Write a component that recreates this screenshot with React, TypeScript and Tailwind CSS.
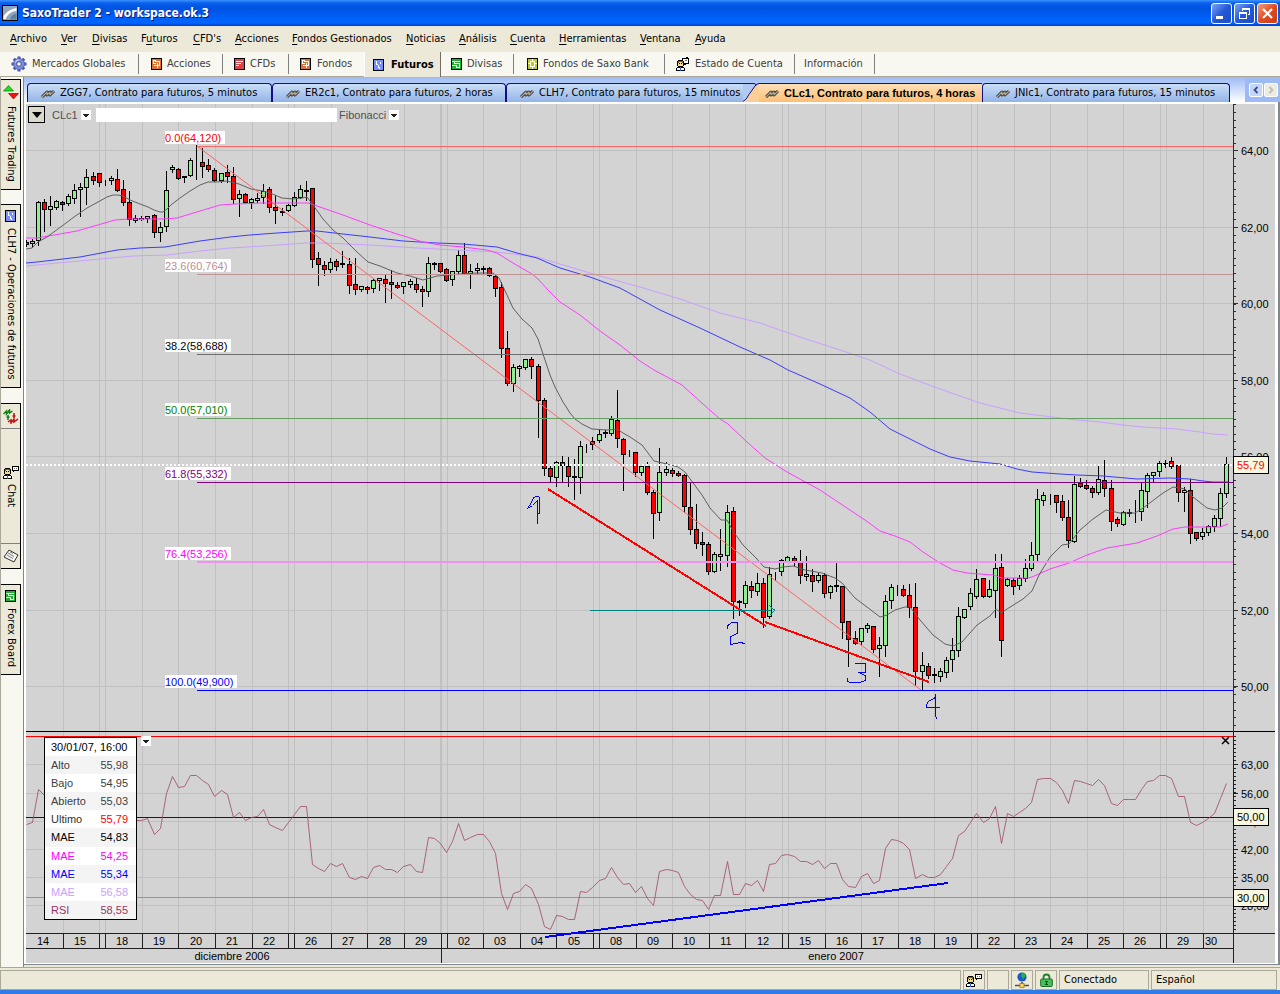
import type { ReactNode } from 'react'

type CandleKind = 'u' | 'd' | 'j' | 'w'
type Candle = [kind: CandleKind, high: number, top: number, bottom: number, low: number]

const UI_FONT = "font-['DejaVu_Sans_Condensed','Noto_Sans',sans-serif]"

const MENU = [
  { label: 'Archivo', hot: 0, width: 'w-[51px]' },
  { label: 'Ver', hot: 0, width: 'w-[31px]' },
  { label: 'Divisas', hot: 0, width: 'w-[49px]' },
  { label: 'Futuros', hot: 1, width: 'w-[52px]' },
  { label: "CFD's", hot: 0, width: 'w-[42px]' },
  { label: 'Acciones', hot: 0, width: 'w-[57px]' },
  { label: 'Fondos Gestionados', hot: 0, width: 'w-[114px]' },
  { label: 'Noticias', hot: 0, width: 'w-[53px]' },
  { label: 'Análisis', hot: 0, width: 'w-[51px]' },
  { label: 'Cuenta', hot: 0, width: 'w-[49px]' },
  { label: 'Herramientas', hot: 0, width: 'w-[81px]' },
  { label: 'Ventana', hot: 0, width: 'w-[55px]' },
  { label: 'Ayuda', hot: 0, width: 'w-[51px]' },
]

const LEGEND = [
  { label: 'Alto', value: '55,98', color: 'text-[#404040]' },
  { label: 'Bajo', value: '54,95', color: 'text-[#404040]' },
  { label: 'Abierto', value: '55,03', color: 'text-[#404040]' },
  { label: 'Ultimo', value: '55,79', color: 'text-[#303030]', valueColor: 'text-[#ff0000]' },
  { label: 'MAE', value: '54,83', color: 'text-black' },
  { label: 'MAE', value: '54,25', color: 'text-[#ff00ff]' },
  { label: 'MAE', value: '55,34', color: 'text-[#0000ff]' },
  { label: 'MAE', value: '56,58', color: 'text-[#c8a0ff]' },
  { label: 'RSI', value: '58,55', color: 'text-[#993366]' },
]

const GRID_X = [
  63, 99, 105, 142, 178, 215, 252, 288, 294, 331, 367, 404, 441, 447, 483, 520, 556, 593, 599, 636, 672, 709, 745,
  782, 788, 825, 861, 898, 934, 971, 977, 1014, 1050, 1087, 1123, 1160, 1166, 1203,
]

const DAYS: [string, number][] = [
  ['14', 43], ['15', 80], ['18', 122], ['19', 159], ['20', 196], ['21', 232], ['22', 269], ['26', 311], ['27', 348],
  ['28', 385], ['29', 421], ['02', 464], ['03', 500], ['04', 537], ['05', 574], ['08', 616], ['09', 653], ['10', 689],
  ['11', 726], ['12', 763], ['15', 805], ['16', 842], ['17', 878], ['18', 915], ['19', 951], ['22', 994], ['23', 1031],
  ['24', 1067], ['25', 1104], ['26', 1140], ['29', 1183], ['30', 1211],
]

const PRICES: [string, number][] = [
  ['64,00', 150], ['62,00', 227], ['60,00', 303], ['58,00', 380], ['56,00', 456], ['54,00', 533], ['52,00', 610],
  ['50,00', 686],
]

const RSI_SCALE: [string, number][] = [
  ['63,00', 764], ['56,00', 793], ['49,00', 821], ['42,00', 849], ['35,00', 877], ['28,00', 905],
]

const FIBO = [
  { label: '0.0(64,120)', y: 146, line: '#ff6464', text: '#ff0000', width: 60 },
  { label: '23.6(60,764)', y: 274, line: '#c09494', text: '#bc8f8f', width: 66 },
  { label: '38.2(58,688)', y: 354, line: '#6e6e6e', text: '#000000', width: 66 },
  { label: '50.0(57,010)', y: 418, line: '#64a064', text: '#008000', width: 66 },
  { label: '61.8(55,332)', y: 482, line: '#800080', text: '#800080', width: 66 },
  { label: '76.4(53,256)', y: 562, line: '#f090f0', text: '#ff00ff', width: 66 },
  { label: '100.0(49,900)', y: 690, line: '#0000ff', text: '#0000ff', width: 72 },
]

// One entry per four hour bar: kind, high, body top, body bottom, low
const CANDLES: Candle[] = [
  ['d', 240, 242, 244, 246], ['u', 239, 241, 243, 246], ['u', 201, 202, 240, 245], ['d', 199, 202, 209, 231],
  ['u', 196, 206, 209, 225], ['u', 200, 201, 207, 209], ['d', 201, 202, 204, 210], ['u', 194, 196, 203, 205],
  ['u', 184, 190, 198, 203], ['u', 183, 187, 189, 216], ['u', 169, 177, 187, 204], ['d', 172, 176, 180, 184],
  ['d', 173, 173, 182, 186], ['w', 180, 180, 185, 185], ['u', 176, 178, 180, 184], ['d', 169, 179, 190, 191],
  ['d', 180, 189, 202, 205], ['d', 191, 202, 219, 225], ['u', 215, 218, 220, 222], ['u', 216, 218, 219, 220],
  ['u', 216, 216, 218, 222], ['d', 214, 215, 232, 237], ['u', 222, 227, 232, 241], ['u', 171, 190, 226, 231],
  ['u', 165, 167, 169, 172], ['d', 168, 169, 178, 179], ['j', 176, 176, 176, 182], ['u', 158, 160, 175, 176],
  ['w', 145, 161, 161, 179], ['d', 148, 162, 166, 177], ['d', 159, 165, 169, 171], ['d', 168, 170, 180, 181],
  ['u', 173, 173, 180, 182], ['d', 165, 172, 176, 182], ['d', 167, 176, 199, 203], ['u', 190, 194, 198, 216],
  ['d', 193, 194, 202, 203], ['u', 198, 199, 202, 208], ['u', 193, 198, 200, 202], ['u', 184, 191, 197, 203],
  ['d', 187, 189, 207, 212], ['d', 195, 207, 210, 223], ['j', 208, 211, 211, 215], ['u', 204, 205, 210, 211],
  ['u', 192, 197, 205, 206], ['u', 185, 189, 197, 198], ['j', 181, 190, 190, 200], ['d', 188, 188, 259, 267],
  ['d', 252, 258, 264, 285], ['d', 261, 265, 269, 275], ['u', 258, 262, 269, 272], ['d', 259, 261, 266, 270],
  ['j', 251, 263, 263, 267], ['d', 258, 264, 285, 293], ['d', 258, 284, 289, 294], ['u', 286, 286, 289, 291],
  ['d', 286, 287, 289, 293], ['u', 279, 280, 288, 292], ['u', 278, 278, 280, 290], ['d', 274, 279, 283, 302],
  ['d', 270, 282, 284, 298], ['d', 282, 285, 287, 288], ['u', 282, 282, 286, 293], ['u', 279, 281, 284, 287],
  ['d', 278, 284, 289, 292], ['d', 286, 289, 291, 306], ['u', 257, 263, 291, 296], ['j', 262, 263, 263, 269],
  ['d', 263, 263, 271, 272], ['d', 268, 269, 280, 281], ['u', 271, 271, 279, 285], ['u', 250, 255, 271, 274],
  ['d', 243, 255, 273, 274], ['u', 264, 271, 273, 288], ['u', 263, 268, 270, 274], ['j', 266, 268, 268, 273],
  ['d', 267, 268, 275, 276], ['d', 275, 276, 288, 296], ['d', 282, 287, 348, 357], ['d', 331, 348, 383, 385],
  ['u', 364, 367, 383, 391], ['u', 365, 366, 368, 376], ['u', 359, 359, 367, 369], ['d', 357, 359, 366, 378],
  ['d', 364, 366, 400, 437], ['d', 398, 400, 468, 475], ['d', 466, 468, 476, 482], ['u', 461, 462, 477, 486],
  ['d', 456, 462, 465, 482], ['d', 457, 466, 476, 486], ['j', 459, 476, 476, 499], ['u', 441, 446, 477, 493],
  ['w', 444, 447, 447, 452], ['d', 437, 441, 444, 449], ['u', 430, 434, 440, 442], ['j', 430, 432, 432, 437],
  ['u', 416, 419, 433, 435], ['d', 390, 420, 438, 447], ['d', 438, 439, 454, 490], ['w', 450, 450, 456, 456],
  ['d', 452, 452, 472, 476], ['u', 466, 466, 472, 475], ['d', 462, 466, 492, 494], ['d', 490, 492, 513, 538],
  ['u', 448, 472, 512, 520], ['u', 462, 469, 472, 475], ['d', 468, 470, 473, 476], ['d', 471, 473, 475, 476],
  ['d', 474, 475, 506, 512], ['d', 482, 507, 529, 534], ['d', 504, 529, 543, 548], ['d', 532, 542, 544, 555],
  ['d', 542, 544, 571, 574], ['u', 552, 554, 571, 572], ['u', 529, 554, 556, 570], ['u', 505, 512, 555, 566],
  ['d', 507, 511, 601, 618], ['j', 600, 601, 601, 615], ['u', 581, 585, 603, 607], ['d', 581, 586, 590, 597],
  ['u', 573, 583, 591, 595], ['d', 578, 583, 617, 627], ['u', 567, 574, 616, 618], ['w', 572, 572, 580, 580],
  ['u', 559, 560, 571, 575], ['u', 556, 557, 561, 562], ['d', 556, 558, 561, 566], ['d', 550, 562, 575, 583],
  ['u', 556, 574, 576, 580], ['d', 569, 575, 581, 591], ['u', 573, 575, 580, 582], ['d', 573, 575, 593, 597],
  ['u', 585, 586, 592, 598], ['j', 563, 585, 585, 591], ['d', 586, 586, 622, 638], ['d', 621, 621, 639, 666],
  ['d', 631, 638, 643, 644], ['u', 628, 628, 641, 644], ['u', 623, 625, 628, 632], ['d', 626, 626, 649, 652],
  ['u', 637, 645, 648, 676], ['u', 595, 601, 645, 656], ['u', 584, 587, 600, 608], ['w', 585, 585, 595, 595],
  ['d', 585, 589, 595, 596], ['d', 584, 595, 607, 617], ['d', 583, 607, 671, 685], ['u', 652, 665, 671, 690],
  ['d', 663, 666, 675, 678], ['j', 668, 674, 674, 682], ['u', 668, 671, 676, 681], ['u', 657, 660, 672, 677],
  ['u', 638, 650, 659, 671], ['u', 607, 616, 650, 656], ['u', 609, 609, 617, 618], ['u', 588, 593, 606, 609],
  ['u', 569, 579, 596, 598], ['d', 578, 578, 596, 597], ['u', 580, 589, 596, 597], ['u', 554, 568, 590, 617],
  ['d', 554, 567, 640, 656], ['u', 578, 579, 585, 586], ['d', 578, 580, 586, 594], ['u', 575, 578, 585, 589],
  ['u', 559, 568, 578, 581], ['u', 542, 555, 568, 570], ['u', 489, 499, 554, 562], ['u', 492, 495, 500, 505],
  ['w', 494, 494, 504, 504], ['d', 495, 495, 502, 512], ['d', 495, 501, 517, 520], ['d', 500, 517, 540, 547],
  ['u', 476, 484, 541, 542], ['d', 478, 483, 486, 487], ['d', 480, 485, 488, 489], ['d', 486, 488, 492, 497],
  ['u', 466, 479, 492, 494], ['d', 460, 480, 488, 496], ['d', 480, 488, 521, 530], ['d', 517, 519, 523, 526],
  ['u', 511, 512, 524, 525], ['j', 509, 512, 512, 516], ['w', 500, 500, 522, 522], ['u', 482, 490, 511, 520],
  ['u', 473, 475, 491, 507], ['u', 472, 472, 475, 481], ['u', 461, 463, 471, 476], ['j', 460, 463, 463, 467],
  ['d', 457, 461, 466, 468], ['d', 465, 465, 492, 501], ['u', 487, 490, 492, 511], ['d', 479, 490, 533, 543],
  ['d', 532, 532, 538, 540], ['u', 528, 532, 536, 539], ['u', 525, 526, 532, 535], ['u', 515, 518, 526, 531],
  ['u', 488, 493, 518, 526], ['u', 457, 464, 493, 497],
]

const RSI = [
  824, 822, 789, 795, 800, 797, 792, 790, 788, 786, 790, 784, 790, 796, 792, 800, 812, 820, 820, 820, 818, 834, 828,
  793, 776, 787, 786, 775, 775, 780, 784, 796, 790, 794, 817, 812, 820, 817, 816, 809, 824, 827, 830, 822, 814, 806,
  806, 864, 868, 871, 863, 866, 863, 877, 879, 876, 878, 867, 865, 869, 869, 872, 866, 864, 871, 872, 837, 838, 843,
  852, 841, 823, 840, 837, 834, 834, 841, 853, 893, 909, 893, 891, 884, 888, 904, 926, 929, 915, 916, 919, 919, 891,
  892, 887, 880, 878, 867, 877, 884, 883, 892, 886, 898, 905, 871, 869, 870, 872, 886, 894, 899, 900, 909, 895, 895,
  861, 894, 894, 883, 885, 880, 891, 864, 863, 855, 854, 856, 861, 861, 864, 860, 868, 863, 863, 879, 886, 887, 876,
  873, 883, 880, 848, 839, 840, 843, 849, 878, 874, 877, 877, 874, 866, 858, 835, 831, 822, 813, 822, 818, 806, 843,
  813, 816, 812, 808, 802, 779, 778, 778, 782, 790, 803, 780, 781, 783, 785, 779, 785, 803, 805, 799, 799, 799, 789,
  781, 780, 775, 775, 778, 796, 796, 822, 825, 822, 818, 813, 798, 783,
]

const MA_FAST =
  '26,249 32,248 38,242 47,237 62,226 74,217 87,208 98,202 107,197 113,195 118,195 123,196 130,200 140,204 148,207 154,210 160,212 163,212 167,209 172,204 180,198 190,191 200,185 208,182 217,182 227,181 239,184 251,189 263,191 270,193 282,198 293,199 302,198 307,197 313,205 323,219 333,230 343,238 357,252 368,262 380,266 397,273 410,276 423,280 437,276 460,274 477,273 493,273 499,278 507,295 513,308 522,319 532,328 538,339 544,357 550,375 555,387 563,402 570,413 575,419 582,424 592,429 607,430 617,429 623,433 630,437 642,445 648,453 654,461 667,464 678,467 685,472 702,495 710,508 721,520 727,520 733,531 743,545 757,559 764,567 775,569 783,567 793,566 805,570 822,573 835,578 842,583 855,598 867,607 880,617 887,615 895,610 905,607 910,607 920,620 933,635 945,644 953,646 962,642 977,625 990,616 996,609 1001,613 1007,609 1023,599 1032,591 1039,575 1050,557 1062,545 1069,544 1080,530 1093,519 1106,510 1120,513 1135,513 1143,508 1163,493 1173,487 1185,489 1193,497 1207,508 1215,510 1222,508 1228,502'
const MA_MEDIUM =
  '26,238 37,238 77,231 115,220 128,219 163,219 177,218 200,211 220,205 235,204 263,203 302,203 308,203 317,206 343,215 370,225 397,234 423,242 440,245 463,247 487,250 497,253 513,263 532,274 538,279 548,290 560,302 580,315 600,331 620,345 640,361 654,370 682,385 703,404 720,419 728,424 747,442 765,458 787,472 820,490 835,500 850,510 865,520 880,531 895,536 910,542 923,552 940,563 953,570 967,573 993,575 1002,578 1027,578 1032,577 1050,569 1069,563 1087,555 1107,548 1137,543 1157,536 1173,529 1185,527 1213,527 1220,527 1228,524'
const MA_SLOW =
  '26,263 37,262 80,257 117,250 140,248 165,247 200,241 230,237 250,235 277,233 307,231 317,231 343,234 370,237 403,241 437,243 463,244 497,247 517,253 537,258 560,268 590,277 620,288 660,310 700,328 740,347 770,360 788,370 820,384 850,398 870,412 890,429 910,439 930,449 950,457 970,461 1000,464 1017,469 1032,472 1060,474 1077,475 1103,476 1137,479 1170,478 1190,479 1203,481 1213,482 1228,482'
const MA_SLOWEST =
  '26,266 100,259 133,256 167,255 200,251 230,248 263,246 307,243 323,243 370,245 417,248 457,250 497,252 537,257 560,264 600,276 640,287 680,299 720,313 760,323 800,337 840,350 870,360 900,374 940,389 980,403 1020,413 1060,418 1077,420 1100,422 1123,425 1143,427 1177,429 1200,432 1213,434 1228,435'

// The first bar stands six bars left of the first day boundary
const barX = (i: number) => Math.floor(62.6 + 6.0955 * (i - 6))

const RSI_POINTS = RSI.map((y, i) => `${barX(i) + 0.5},${y + 0.5}`).join(' ')

function CandleBar({ candle, x }: { candle: Candle; x: number }) {
  const [kind, high, top, bottom, low] = candle
  return (
    <g>
      <rect x={x} y={high} width={1} height={low - high + 1} fill="#000" />
      {kind === 'j' && <rect x={x - 2} y={top} width={5} height={2} fill="#000" />}
      {(kind === 'u' || kind === 'd') && (
        <>
          <rect x={x - 2} y={top} width={5} height={bottom - top + 1} fill="#000" />
          <rect
            x={x - 1}
            y={top + 1}
            width={3}
            height={Math.max(bottom - top - 1, 1)}
            fill={kind === 'u' ? '#90ee90' : '#ff0000'}
          />
        </>
      )}
    </g>
  )
}

function PriceTag({ y, label, color }: { y: number; label: string; color: string }) {
  return (
    <g>
      <rect x={1233.5} y={y + 0.5} width={35} height={17} fill="#f8f8e0" stroke="#000" />
      <text x={1237} y={y + 13} fill={color}>
        {label}
      </text>
    </g>
  )
}

function PriceChart() {
  return (
    <svg viewBox="26 104 1249 627" className="block h-auto w-full font-['Liberation_Sans',Arial,sans-serif] text-[11px]">
      <g shapeRendering="crispEdges">
        <g fill="#c0c0c0">
          {GRID_X.map((x) => (
            <rect key={x} x={x} y={104} width={1} height={627} />
          ))}
          <rect x={440} y={104} width={2} height={627} />
          {PRICES.map(([label, y]) => (
            <rect key={label} x={26} y={y} width={1207} height={1} />
          ))}
        </g>
        {CANDLES.map((candle, i) => (
          <CandleBar key={i} candle={candle} x={barX(i)} />
        ))}
      </g>

      <g fill="none" strokeWidth={1}>
        <polyline points={MA_SLOWEST} stroke="#c8a0ff" />
        <polyline points={MA_SLOW} stroke="#3c3cff" />
        <polyline points={MA_MEDIUM} stroke="#ff3cff" />
        <polyline points={MA_FAST} stroke="#606060" />
      </g>

      <line x1={197} y1={146} x2={921} y2={690} stroke="#ff6464" />
      <g shapeRendering="crispEdges">
        <line x1={26} y1={465} x2={1233} y2={465} stroke="#fff" strokeWidth={2} strokeDasharray="2 2" />
        {FIBO.map((level) => (
          <g key={level.label}>
            <rect x={197} y={level.y} width={1036} height={1} fill={level.line} />
            {level.y === 562 && <rect x={197} y={561} width={1036} height={1} fill={level.line} />}
            <rect x={165} y={level.y - 15} width={level.width} height={13} fill="#fff" />
            <text x={165} y={level.y - 4} fill={level.text}>
              {level.label}
            </text>
          </g>
        ))}
        <g fill="none" strokeWidth={2} stroke="#ff0000">
          <path d="M548 489 L766 626" />
          <path d="M765 622 L929 682" />
        </g>
        <g fill="none" stroke="#008080">
          <path d="M590 610.5 H771" />
          <path d="M769.5 605 L771.5 608 L774.5 610 L772.5 613 L769.5 616" strokeDasharray="2 1" />
        </g>
        <g fill="none" stroke="#0000ff" strokeWidth={1}>
          <path d="M527.5 508.5 L531.5 502.5 L533.5 497.5 L536 496.5 H539 L539.5 502 V513.5 H537.5 V523.5 M527.5 508.5 L532.5 505.5 L537.5 500.5 V513" />
          <path d="M727.5 628.5 V626 L731.5 622.5 H737.5 V633.5 L730.5 636.5 V644.5 L740 642.5 L745 643.5" />
          <path d="M854.5 663.5 H865.5 V672.5 H858.5 L865.5 675.5 V680.5 L860 682.5 H850 L847.5 681 V678" />
          <path d="M935.5 693.5 V713.5 L936.5 719.5 M935.5 697.5 L928.5 701.5 L926.5 704.5 V707.5 H940" />
        </g>
      </g>

      <g shapeRendering="crispEdges" fill="#303030">
        <rect x={1233} y={104} width={1} height={627} />
        {Array.from({ length: 82 }, (_, i) => Math.round(150.4 + (i - 6) * 7.66)).filter((y) => y < 730).map((y) => (
          <rect key={y} x={1234} y={y} width={2} height={1} />
        ))}
        {PRICES.map(([label, y]) => (
          <rect key={label} x={1234} y={y} width={4} height={1} />
        ))}
      </g>
      {PRICES.map(([label, y]) => (
        <text key={label} x={1241} y={y + 5} fill="#000">
          {label}
        </text>
      ))}
      <PriceTag y={456} label="55,79" color="#ff0000" />
    </svg>
  )
}

function RsiChart() {
  return (
    <svg viewBox="26 731 1249 232" className="block h-auto w-full font-['Liberation_Sans',Arial,sans-serif] text-[11px]">
      <g shapeRendering="crispEdges">
        <g fill="#c0c0c0">
          {GRID_X.map((x) => (
            <rect key={x} x={x} y={731} width={1} height={202} />
          ))}
          <rect x={440} y={731} width={2} height={202} />
          {RSI_SCALE.map(([label, y]) => (
            <rect key={label} x={26} y={y} width={1207} height={1} />
          ))}
        </g>
        <rect x={26} y={731} width={1249} height={1} fill="#000" />
        <rect x={26} y={736} width={1207} height={1} fill="#ff0000" />
        <rect x={26} y={817} width={1207} height={1} fill="#0000ff" />
        <rect x={26} y={897} width={1207} height={1} fill="#00ff00" />
      </g>
      <polyline points={RSI_POINTS} fill="none" stroke="#a05070" strokeWidth={1} strokeOpacity={0.85} />

      <g shapeRendering="crispEdges" fill="#202020">
        <rect x={26} y={933} width={1249} height={1} />
        <rect x={26} y={948} width={1208} height={1} />
        <rect x={1233} y={731} width={1} height={232} />
        <rect x={441} y={948} width={1} height={15} />
        {GRID_X.map((x) => (
          <rect key={x} x={x} y={933} width={1} height={15} />
        ))}
        {Array.from({ length: 49 }, (_, i) => Math.round(736 + i * 4.03)).map((y) => (
          <rect key={y} x={1234} y={y} width={2} height={1} />
        ))}
        {RSI_SCALE.map(([label, y]) => (
          <rect key={label} x={1234} y={y} width={4} height={1} />
        ))}
      </g>
      <path d="M545 937 L948 883" fill="none" stroke="#0000ff" strokeWidth={2} shapeRendering="crispEdges" />

      <g fill="#000">
        {DAYS.map(([label, x]) => (
          <text key={x} x={x} y={945} textAnchor="middle">
            {label}
          </text>
        ))}
        <text x={232} y={960} textAnchor="middle">
          diciembre 2006
        </text>
        <text x={836} y={960} textAnchor="middle">
          enero 2007
        </text>
        {RSI_SCALE.map(([label, y]) => (
          <text key={label} x={1241} y={y + 5}>
            {label}
          </text>
        ))}
      </g>
      <PriceTag y={808} label="50,00" color="#000" />
      <PriceTag y={889} label="30,00" color="#000" />
    </svg>
  )
}

function GearIcon() {
  return (
    <svg width="16" height="16" viewBox="0 0 16 16" aria-hidden="true">
      <g stroke="#4a56b0" strokeWidth="3">
        <path d="M8 .5v15M.5 8h15M2.8 2.8l10.4 10.4M13.2 2.8L2.8 13.2" />
      </g>
      <circle cx="8" cy="8" r="5.5" fill="#7f8fdc" stroke="#4a56b0" strokeWidth=".8" />
      <path d="M4.3 6.5a4.2 4.2 0 0 1 4-2.6" fill="none" stroke="#c4cefa" strokeWidth="1.4" />
      <circle cx="8" cy="8" r="2.3" fill="#f8f7f0" stroke="#3c4898" />
    </svg>
  )
}

function BoxIcon({ color, children }: { color: string; children: ReactNode }) {
  return (
    <svg width="11" height="12" viewBox="0 0 11 12" shapeRendering="crispEdges" className="shrink-0" aria-hidden="true">
      <rect width="11" height="12" fill="#000" />
      <rect x="1" y="1" width="9" height="10" fill={color} />
      <g fill="#fff">{children}</g>
    </svg>
  )
}

const ICONS = {
  stocks: (
    <BoxIcon color="#e07030">
      <path d="M2 2h3v1H2zM2 3h1v3H2zM3 5h2v1H3zM4 3h5v1H4zM8 4h1v4H8zM6 5h1v5H6zM3 7h3v1H3zM7 7h1v1H7z" />
    </BoxIcon>
  ),
  cfds: (
    <BoxIcon color="#e04048">
      <path d="M2 3h7v1H2zM2 5h5v1H2zM2 7h3v1H2z" />
    </BoxIcon>
  ),
  futures: (
    <BoxIcon color="#7890f8">
      <path d="M3 2h1v4H3zM4 5h1v1H4zM5 6h1v3H5zM6 8h1v2H6zM7 3h1v2H7z" />
    </BoxIcon>
  ),
  forex: (
    <BoxIcon color="#20b030">
      <path d="M1 3h8v1H1zM3 4h1v2H3zM3 5h6v1H3zM8 6h1v3H8zM1 7h5v1H1zM5 8h1v2H5zM5 9h4v1H5z" />
    </BoxIcon>
  ),
  funds: (
    <BoxIcon color="#c0c830">
      <path d="M3 3h5v1H3zM3 8h5v1H3zM3 4h1v4H3zM7 4h1v4H7zM5 1h1v2H5zM5 9h1v2H5zM1 5h2v1H1zM8 5h2v1H8z" />
    </BoxIcon>
  ),
}

// Head, hair, shirt and tie on whole pixels, shared by the toolbar, side strip and status bar
function Person() {
  return (
    <g>
      <path d="M2 3h5v1h1v5H7v1H2V9H1V4h1z" fill="#000" />
      <path d="M2 5h5v4H2z" fill="#f0dc8c" />
      <path d="M2 4h5v2H6V5H3v1H2z" fill="#806020" />
      <path d="M3 6h1v1H3zM5 6h1v1H5z" fill="#000" />
      <path d="M1 10h7v1h1v3H0v-3h1z" fill="#000" />
      <path d="M1 11h7v2H1z" fill="#fff" />
      <path d="M4 10h1v4H4z" fill="#3060e0" />
    </g>
  )
}

function PersonIcon() {
  return (
    <svg width="14" height="14" viewBox="0 0 14 14" shapeRendering="crispEdges" className="shrink-0" aria-hidden="true">
      <path d="M6 1h4V0h2v1h1v6h-3v1H8V3H6z" fill="#000" />
      <path d="M7 2h5v4H8V3H7z" fill="#fff" />
      <path d="M9 3h2v1H9z" fill="#707070" />
      <Person />
    </svg>
  )
}

function ChatIcon() {
  return (
    <svg width="16" height="14" viewBox="0 0 16 14" shapeRendering="crispEdges" className="shrink-0" aria-hidden="true">
      <path d="M9 1h7v5h-5v1h-1V6H9z" fill="#000" />
      <path d="M10 2h5v3h-5z" fill="#fff" />
      <path d="M11 3h1v1h-1zM13 3h1v1h-1z" fill="#707070" />
      <Person />
    </svg>
  )
}

function TickIcon() {
  return (
    <svg width="14" height="9" viewBox="0 0 14 9" className="shrink-0" aria-hidden="true">
      <g fill="none" strokeLinejoin="round">
        <path d="M1 8l5-5v3l3-3v3l4-4" stroke="#303030" strokeWidth="3" />
        <path d="M1 8l5-5v3l3-3v3l4-4" stroke="#b0a890" strokeWidth="1.2" />
      </g>
    </svg>
  )
}

function DownArrow() {
  return (
    <svg width="10" height="10" viewBox="0 0 10 10" shapeRendering="crispEdges" aria-hidden="true">
      <rect width="10" height="10" fill="#fff" />
      <path d="M2 4h6v1H7v1H6v1H4V6H3V5H2z" fill="#202020" />
    </svg>
  )
}

function TitleBar() {
  const button = 'flex h-[21px] w-[21px] items-center justify-center rounded-[3px] border border-white'
  return (
    <header className="flex h-[26px] items-center bg-[linear-gradient(#3a93ff_0,#0a60ee_3px,#0052e0_8px,#0060fa_18px,#0066ff_23px,#003cc8_26px)] pr-[2px] pl-[2px]">
      <svg width="16" height="16" viewBox="0 0 16 16" aria-hidden="true">
        <rect x=".5" y=".5" width="15" height="15" fill="#8fa8c0" stroke="#000" />
        <path d="M1.5 11q5-7 13-8v3q-7 0-11 8h-2z" fill="#fff" />
        <path d="M8 14.5q1-5 6.5-6v6z" fill="#64829c" />
      </svg>
      <h1 className="ml-[4px] flex-1 text-[12px] leading-[16px] font-bold text-white [text-shadow:1px_1px_0_#0a1883]">
        SaxoTrader 2 - workspace.ok.3
      </h1>
      <div className="flex gap-[2px]">
        <button aria-label="Minimizar" className={`${button} bg-[linear-gradient(135deg,#7ea4f4,#2458d8_50%,#1c4cc8)]`}>
          <svg width="13" height="13" viewBox="0 0 13 13">
            <rect x="1" y="9" width="7" height="3" fill="#fff" />
          </svg>
        </button>
        <button aria-label="Restaurar" className={`${button} bg-[linear-gradient(135deg,#7ea4f4,#2458d8_50%,#1c4cc8)]`}>
          <svg width="13" height="13" viewBox="0 0 13 13" shapeRendering="crispEdges" fill="#fff">
            <path d="M4 1h8v7h-2V7h1V3H5v1H4z" />
            <path d="M1 5h8v7H1zM2 7v4h6V7z" fillRule="evenodd" />
          </svg>
        </button>
        <button aria-label="Cerrar" className={`${button} bg-[linear-gradient(135deg,#f0a080,#e04c24_50%,#c83c14)]`}>
          <svg width="13" height="13" viewBox="0 0 13 13">
            <path d="M2 2l9 9M11 2l-9 9" stroke="#fff" strokeWidth="2.2" />
          </svg>
        </button>
      </div>
    </header>
  )
}

function MenuBar() {
  return (
    <nav className="flex h-[26px] items-center bg-[#ece9d8] pl-[10px]">
      {MENU.map((item) => (
        <button key={item.label} className={`${item.width} shrink-0 text-left whitespace-nowrap`}>
          {item.label.slice(0, item.hot)}
          <span className="underline underline-offset-2">{item.label[item.hot]}</span>
          {item.label.slice(item.hot + 1)}
        </button>
      ))}
    </nav>
  )
}

function ToolItem({ icon, label, className }: { icon?: ReactNode; label: string; className: string }) {
  return (
    <div className={`flex shrink-0 items-center ${className}`}>
      <button className="flex h-[20px] flex-1 items-center gap-[5px] border-r border-[#808080] whitespace-nowrap text-[#404040]">
        {icon}
        {label}
      </button>
    </div>
  )
}

function ToolBar() {
  return (
    <nav className="flex h-[25px] border-b border-[#aca899] bg-[#f8f7f0]">
      <ToolItem icon={<GearIcon />} label="Mercados Globales" className="w-[139px] pl-[11px]" />
      <ToolItem icon={ICONS.stocks} label="Acciones" className="w-[84px] pl-[12px]" />
      <ToolItem icon={ICONS.cfds} label="CFDs" className="w-[66px] pl-[11px]" />
      <div className="flex w-[75px] shrink-0 items-center pl-[11px] text-[#404040]">
        <button className="flex items-center gap-[6px]">
          {ICONS.stocks}
          Fondos
        </button>
      </div>
      <button className="flex h-[25px] w-[77px] shrink-0 items-center gap-[7px] border-r border-l border-r-[#716f64] border-l-white bg-[#ece9d8] pl-[8px] font-bold text-black">
        {ICONS.futures}
        Futuros
      </button>
      <ToolItem icon={ICONS.forex} label="Divisas" className="w-[73px] pl-[10px]" />
      <ToolItem icon={ICONS.funds} label="Fondos de Saxo Bank" className="w-[151px] pl-[13px]" />
      <ToolItem icon={<PersonIcon />} label="Estado de Cuenta" className="w-[130px] pl-[11px]" />
      <ToolItem label="Información" className="w-[80px] pl-[9px]" />
    </nav>
  )
}

function SideTab({ height, icon, label }: { height: string; icon: ReactNode; label: string }) {
  return (
    <button
      className={`${height} flex w-[20px] shrink-0 flex-col items-center gap-[6px] border border-l-0 border-black bg-[#ece9d8] pt-[5px]`}
    >
      {icon}
      <span className="leading-[14px] whitespace-nowrap [writing-mode:vertical-rl]">{label}</span>
    </button>
  )
}

function SideStrip() {
  return (
    <aside className="flex w-[23px] shrink-0 flex-col border-l border-[#aca899] bg-[#f8f7f0] pt-[2px] text-black">
      <SideTab
        height="h-[111px]"
        label="Futures Trading"
        icon={
          <svg width="16" height="15" viewBox="0 0 16 15" className="shrink-0">
            <path d="M5.5 .5L10.5 6H.5z" fill="#20e020" stroke="#006000" strokeWidth=".6" />
            <path d="M10.5 14L5.5 8.5h10z" fill="#f01010" stroke="#700000" strokeWidth=".6" />
          </svg>
        }
      />
      <div className="h-[14px] shrink-0" />
      <SideTab height="h-[184px]" label="CLH7 - Operaciones de futuros" icon={ICONS.futures} />
      <div className="h-[15px] shrink-0" />
      <div className="flex h-[166px] w-[20px] shrink-0 flex-col border border-l-0 border-black bg-[#ece9d8]">
        <button aria-label="Operaciones" className="flex h-[25px] items-center justify-center border-b border-[#808080]">
          <svg width="16" height="15" viewBox="0 0 16 15" fill="none" strokeWidth="1.5">
            <path d="M.5 5l3-3v3l3-4v3l3-2M5 6v5M3.5 8h3" stroke="#108010" />
            <path d="M5 13l3-2v3l3-4v3l4-3M11 4v5M9.5 7h3" stroke="#c01010" />
          </svg>
        </button>
        <button className="flex flex-1 flex-col items-center justify-center gap-[5px]">
          <ChatIcon />
          <span className="leading-[14px] [writing-mode:vertical-rl]">Chat</span>
        </button>
        <button aria-label="Noticias" className="flex h-[25px] items-center justify-center border-t border-[#808080]">
          <svg width="16" height="14" viewBox="0 0 16 14">
            <path d="M1 8L6 1l9 5-4 7z" fill="#f4f4f4" stroke="#303030" />
            <path d="M5 4l6 3.5M4 6l6 3.5M7 3l3 1.5" stroke="#808080" />
          </svg>
        </button>
      </div>
      <div className="h-[15px] shrink-0" />
      <SideTab height="h-[91px]" label="Forex Board" icon={ICONS.forex} />
    </aside>
  )
}

function ChartTab({ label, className }: { label: string; className: string }) {
  return (
    <button
      role="tab"
      aria-selected={false}
      className={`${className} flex h-[19px] items-center gap-[5px] rounded-t-[4px] border border-b-0 border-[#101080] bg-[linear-gradient(#cadef6,#94b4e8)] pl-[13px] whitespace-nowrap`}
    >
      <TickIcon />
      {label}
    </button>
  )
}

function ChartTabs() {
  return (
    <div role="tablist" className="flex h-[25px] items-end bg-[linear-gradient(#9cbaf4,#ffffff)] pl-[3px]">
      <ChartTab label="ZGG7, Contrato para futuros, 5 minutos" className="w-[245px]" />
      <ChartTab label="ER2c1, Contrato para futuros, 2 horas" className="w-[234px]" />
      <ChartTab label="CLH7, Contrato para futuros, 15 minutos" className="w-[237px] rounded-r-none border-r-0" />
      <svg width="16" height="19" viewBox="0 0 16 19" className="shrink-0" aria-hidden="true">
        <path d="M0 0H13L10 6 0 19z" fill="#b0caf0" />
        <path d="M0 19q3-1 6-7l6-9q2-2.5 4-2.5V19z" fill="#fdcf98" />
        <path d="M0 .5h11q2 0 2 2M0 18.5q3-1 6-7l6-8.5q2-2.5 4-2.5" fill="none" stroke="#101080" />
      </svg>
      <button
        role="tab"
        aria-selected={true}
        className="flex h-[19px] w-[223px] items-center gap-[5px] border-t border-[#101080] bg-[linear-gradient(#fde0b8,#ffbf74)] pl-[6px] font-['Liberation_Sans',Arial,sans-serif] font-bold whitespace-nowrap"
      >
        <TickIcon />
        CLc1, Contrato para futuros, 4 horas
      </button>
      <ChartTab label="JNIc1, Contrato para futuros, 15 minutos" className="w-[248px]" />
      <div className="ml-auto flex h-full w-[35px] items-center gap-[1px] bg-[#9cbaf4] pl-[4px]">
        <button aria-label="Anterior" className="flex h-[14px] w-[14px] items-center justify-center rounded-[2px] border border-white bg-[#c4d6fc]">
          <svg width="8" height="8" viewBox="0 0 8 8">
            <path d="M5.5 1L2.5 4l3 3" fill="none" stroke="#3c5080" strokeWidth="1.8" />
          </svg>
        </button>
        <button aria-label="Siguiente" className="flex h-[14px] w-[14px] items-center justify-center rounded-[2px] border border-white bg-[#ecebe4]">
          <svg width="8" height="8" viewBox="0 0 8 8">
            <path d="M2.5 1l3 3-3 3" fill="none" stroke="#c0beb0" strokeWidth="1.8" />
          </svg>
        </button>
      </div>
    </div>
  )
}

function ChartSelect({ label, value, className }: { label: string; value: string; className: string }) {
  return (
    <div className={`relative flex items-center ${className}`}>
      <select aria-label={label} defaultValue={value} className="w-full appearance-none bg-transparent text-[#505050]">
        <option>{value}</option>
      </select>
      <span className="pointer-events-none absolute right-0">
        <DownArrow />
      </span>
    </div>
  )
}

function Legend() {
  return (
    <table className="absolute top-[6px] left-[18px] h-[183px] w-[93px] border-collapse border border-black bg-white">
      <thead>
        <tr className="h-[18px]">
          <th colSpan={2} className="p-0 pl-[6px] text-left font-normal whitespace-nowrap text-black">
            30/01/07, 16:00
          </th>
        </tr>
      </thead>
      <tbody>
        {LEGEND.map((row, i) => (
          <tr key={i} className="h-[18px] odd:bg-[#f4f4f4]">
            <td className={`p-0 pl-[6px] ${row.color}`}>{row.label}</td>
            <td className={`p-0 pr-[8px] text-right ${row.valueColor ?? row.color}`}>{row.value}</td>
          </tr>
        ))}
      </tbody>
    </table>
  )
}

function ChartWindow() {
  return (
    <main className="border-t-2 border-r-3 border-b border-l-2 border-white bg-[#d3d3d3] font-['Liberation_Sans',Arial,sans-serif]">
      <section aria-label="CLc1" className="relative">
        <PriceChart />
        <div className="absolute top-[2px] left-[2px] flex items-center">
          <button aria-label="Menú" className="flex h-[17px] w-[17px] items-center justify-center border border-black bg-[#dcd8cc]">
            <svg width="10" height="6" viewBox="0 0 10 6">
              <path d="M0 0h10L5 6z" fill="#000" />
            </svg>
          </button>
          <ChartSelect label="Instrumento" value="CLc1" className="mr-[5px] ml-[7px] w-[39px]" />
          <input aria-label="Buscar instrumento" className="h-[14px] w-[241px] bg-white px-1 outline-none" />
          <ChartSelect label="Estudio" value="Fibonacci" className="ml-[2px] w-[60px]" />
        </div>
      </section>
      <section aria-label="RSI" className="relative">
        <RsiChart />
        <Legend />
        <button aria-label="Opciones" className="absolute top-[5px] left-[115px]">
          <DownArrow />
        </button>
        <button aria-label="Cerrar RSI" className="absolute top-[5px] right-[45px]">
          <svg width="9" height="9" viewBox="0 0 9 9" className="block">
            <path d="M1 1l7 7M8 1L1 8" stroke="#000" strokeWidth="1.5" />
          </svg>
        </button>
      </section>
    </main>
  )
}

function StatusBar() {
  const cell = 'flex h-[20px] shrink-0 items-center border border-[#aca899]'
  return (
    <footer className="mt-auto flex gap-[2px] border-t border-[#aca899] bg-[#ece9d8] pt-[2px] pr-[3px]">
      <div className="h-[20px] flex-1 border border-[#aca899]" />
      <div className={`${cell} w-[22px] justify-center`}>
        <ChatIcon />
      </div>
      <div className={`${cell} w-[22px]`} />
      <div className={`${cell} w-[22px] justify-center`}>
        <svg width="14" height="16" viewBox="0 0 14 16">
          <circle cx="7" cy="5" r="4.6" fill="#1858c8" />
          <path d="M7 .5q4 1 3.5 4L8 7 6 4z" fill="#28b040" />
          <path d="M7 10v2M0 13.5h14" stroke="#505050" strokeWidth="1.6" />
          <rect x="5" y="11.5" width="4" height="4" fill="#f8d860" stroke="#a07820" strokeWidth=".8" />
        </svg>
      </div>
      <div className={`${cell} w-[22px] justify-center`}>
        <svg width="13" height="14" viewBox="0 0 13 14">
          <path d="M3.5 7V4.5a3 3 0 0 1 6 0V7" fill="none" stroke="#208030" strokeWidth="1.8" />
          <rect x=".7" y="6" width="11.6" height="7.5" rx="1" fill="#48c058" stroke="#187028" />
          <path d="M6.5 8v4M5 8.5h3M5 11.5h3" stroke="#0c5018" strokeWidth="1.2" />
        </svg>
      </div>
      <div className={`${cell} w-[90px] pl-[4px]`}>Conectado</div>
      <div className={`${cell} w-[126px] pl-[4px]`}>Español</div>
    </footer>
  )
}

export default function App() {
  return (
    <div className={`${UI_FONT} flex min-h-screen flex-col bg-[#ece9d8] text-[11px] leading-[14px] text-black`}>
      <TitleBar />
      <MenuBar />
      <ToolBar />
      <div className="flex flex-1">
        <SideStrip />
        <div className="min-w-0 flex-1 border-l border-[#808890] bg-[#ece9d8]">
          <ChartTabs />
          <div className="border-r-2 border-b border-[#808890]">
            <ChartWindow />
          </div>
        </div>
      </div>
      <StatusBar />
      <div className="h-[4px] bg-[#2f7ce8]" />
    </div>
  )
}
